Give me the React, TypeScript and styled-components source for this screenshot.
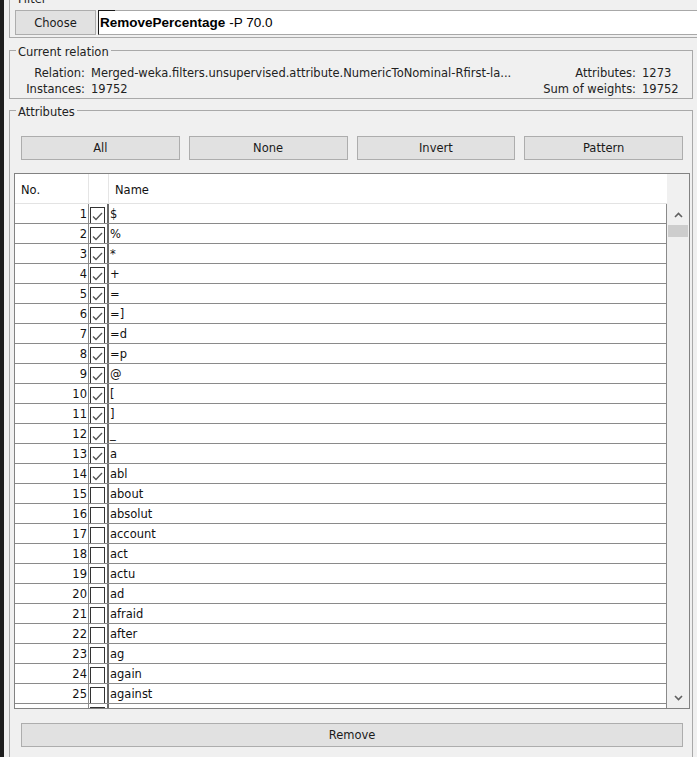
import React from 'react';
import styled, { createGlobalStyle } from 'styled-components';

const Global = createGlobalStyle`
  html, body { margin: 0; padding: 0; background: #1e1e1e; }
  body {
    font-family: "DejaVu Sans", Tahoma, sans-serif;
    font-size: 11.5px;
    color: #111;
  }
  #root { width: 697px; height: 757px; overflow: hidden; }
`;

const Frame = styled.div`
  display: flex;
  width: 697px;
  height: 757px;
  overflow: hidden;
  background: #1e1e1e;
`;

const Panel = styled.div`
  flex: 1;
  min-width: 0;
  margin-left: 4px;
  padding: 0 4px 0 5px;
  background: #f0f0f0;
  display: flex;
  flex-direction: column;
`;

const Group = styled.div<{ $mt: number }>`
  position: relative;
  flex: none;
  border: 1px solid #a9a9a9;
  margin-top: ${(p) => p.$mt}px;
`;

const GroupTitle = styled.span`
  position: absolute;
  top: -6px;
  left: 6px;
  padding: 0 2px;
  line-height: 14px;
  background: #f0f0f0;
  color: #222;
`;

const FilterGroup = styled(Group)`
  margin-right: -30px;
  padding: 12px 0 2px 5px;
`;

const FilterRow = styled.div`
  display: flex;
  align-items: flex-start;
  gap: 2px;
  height: 25px;
`;

const Button = styled.div<{ $h?: number }>`
  box-sizing: border-box;
  height: ${(p) => p.$h ?? 24}px;
  background: #e1e1e1;
  border: 1px solid #adadad;
  display: flex;
  align-items: center;
  justify-content: center;
  color: #1a1a1a;
`;

const ChooseButton = styled(Button)`
  width: 81px;
  flex: none;
`;

const FilterField = styled.div`
  position: relative;
  flex: 1;
  box-sizing: border-box;
  height: 25px;
  background: #fff;
  border-top: 1px solid #a8a8a8;
  border-bottom: 1px solid #a8a8a8;
  border-left: 1px solid #1a1a1a;
  display: flex;
  align-items: center;
  padding-left: 1px;
  font-family: "Liberation Sans", Arial, sans-serif;
  font-size: 13.5px;
  color: #000;
  &::before {
    content: "";
    position: absolute;
    left: -1px;
    top: -1px;
    width: 17px;
    height: 1px;
    background: #1a1a1a;
  }
`;

const FilterName = styled.b`
  font-weight: bold;
  margin-right: 4px;
`;

const RelationGroup = styled(Group)`
  padding: 14px 0 1px 0;
`;

const RelationGrid = styled.div`
  display: grid;
  grid-template-columns: 75px 1fr auto 50px;
  column-gap: 6px;
  grid-auto-rows: 16px;
  align-items: center;
  line-height: 16px;
`;

const Label = styled.span`
  text-align: right;
  color: #222;
  white-space: nowrap;
`;

const Value = styled.span`
  color: #222;
  white-space: nowrap;
  overflow: hidden;
`;

const AttributesGroup = styled(Group)`
  padding-bottom: 30px;
`;

const ButtonRow = styled.div`
  display: grid;
  grid-template-columns: repeat(4, 1fr);
  column-gap: 9px;
  margin: 25px 9px 0 11px;
`;

const Table = styled.div`
  margin: 13px 2px 0 4px;
  height: 536px;
  box-sizing: border-box;
  border: 1px solid #828282;
  display: grid;
  grid-template-columns: 1fr 22px;
  grid-template-rows: 30px 1fr;
  overflow: hidden;
`;

const cols = '74px 20px 1fr';

const Header = styled.div`
  display: grid;
  grid-template-columns: ${cols};
  background: #fff;
  border-bottom: 1px solid #e3e3e3;
`;

const HeaderCell = styled.div<{ $last?: boolean }>`
  display: flex;
  align-items: center;
  padding: 2px 0 0 6px;
  border-right: ${(p) => (p.$last ? 'none' : '1px solid #e5e5e5')};
  color: #111;
`;

const Corner = styled.div`
  background: #f0f0f0;
`;

const Body = styled.div`
  overflow: hidden;
  background: #fff;
`;

const Row = styled.div`
  display: grid;
  grid-template-columns: ${cols};
  height: 20px;
  box-sizing: border-box;
  border-bottom: 1px solid #8a8a8a;
`;

const NumCell = styled.div`
  border-right: 1px solid #8a8a8a;
  display: flex;
  align-items: center;
  justify-content: flex-end;
  padding: 1px 1px 0 0;
`;

const CheckCell = styled.div`
  border-right: 2px solid #6a6a6a;
  display: flex;
  align-items: flex-end;
  padding-left: 1px;
`;

const Box = styled.div`
  width: 15px;
  height: 16px;
  box-sizing: border-box;
  border: 1px solid #333;
  border-bottom: none;
  background: #fff;
  display: flex;
  align-items: center;
  justify-content: center;
`;

const NameCell = styled.div`
  border-right: 1px solid #8a8a8a;
  display: flex;
  align-items: center;
  padding: 1px 0 0 1px;
  white-space: nowrap;
`;

const ScrollBar = styled.div`
  background: #f0f0f0;
  display: flex;
  flex-direction: column;
`;

const ArrowBox = styled.div`
  height: 21px;
  flex: none;
  display: flex;
  align-items: center;
  justify-content: center;
`;

const Thumb = styled.div`
  height: 12px;
  margin: 0 1px 0 1px;
  background: #cdcdcd;
  flex: none;
`;

const Track = styled.div`
  flex: 1;
`;

const RemoveButton = styled(Button)`
  margin: 14px 9px 0 11px;
`;

const Chevron = ({ up }: { up: boolean }) => (
  <svg width="9" height="6" viewBox="0 0 9 6">
    <polyline
      points={up ? '1,5 4.5,1.5 8,5' : '1,1 4.5,4.5 8,1'}
      fill="none"
      stroke="#606060"
      strokeWidth="1.6"
    />
  </svg>
);

const Check = () => (
  <svg width="13" height="12" viewBox="0 0 13 12">
    <polyline points="2,6.5 5,9.5 11,3" fill="none" stroke="#555" strokeWidth="1.3" />
  </svg>
);

const names = [
  '$', '%', '*', '+', '=', '=]', '=d', '=p', '@', '[', ']', '_', 'a', 'abl',
  'about', 'absolut', 'account', 'act', 'actu', 'ad', 'afraid', 'after', 'ag',
  'again', 'against',
];

export default function App() {
  return (
    <>
      <Global />
      <Frame>
        <Panel>
          <FilterGroup $mt={-3}>
            <GroupTitle>Filter</GroupTitle>
            <FilterRow>
              <ChooseButton $h={25}>Choose</ChooseButton>
              <FilterField>
                <FilterName>RemovePercentage</FilterName>-P 70.0
              </FilterField>
            </FilterRow>
          </FilterGroup>

          <RelationGroup $mt={12}>
            <GroupTitle>Current relation</GroupTitle>
            <RelationGrid>
              <Label>Relation:</Label>
              <Value>Merged-weka.filters.unsupervised.attribute.NumericToNominal-Rfirst-la...</Value>
              <Label>Attributes:</Label>
              <Value>1273</Value>
              <Label>Instances:</Label>
              <Value>19752</Value>
              <Label>Sum of weights:</Label>
              <Value>19752</Value>
            </RelationGrid>
          </RelationGroup>

          <AttributesGroup $mt={11}>
            <GroupTitle>Attributes</GroupTitle>
            <ButtonRow>
              <Button>All</Button>
              <Button>None</Button>
              <Button>Invert</Button>
              <Button>Pattern</Button>
            </ButtonRow>
            <Table>
              <Header>
                <HeaderCell>No.</HeaderCell>
                <HeaderCell />
                <HeaderCell $last>Name</HeaderCell>
              </Header>
              <Corner />
              <Body>
                {names.map((n, i) => (
                  <Row key={i}>
                    <NumCell>{i + 1}</NumCell>
                    <CheckCell>
                      <Box>{i < 14 ? <Check /> : null}</Box>
                    </CheckCell>
                    <NameCell>{n}</NameCell>
                  </Row>
                ))}
                <Row>
                  <NumCell />
                  <CheckCell>
                    <Box />
                  </CheckCell>
                  <NameCell />
                </Row>
              </Body>
              <ScrollBar>
                <ArrowBox>
                  <Chevron up />
                </ArrowBox>
                <Thumb />
                <Track />
                <ArrowBox>
                  <Chevron up={false} />
                </ArrowBox>
              </ScrollBar>
            </Table>
            <RemoveButton>Remove</RemoveButton>
          </AttributesGroup>
        </Panel>
      </Frame>
    </>
  );
}
